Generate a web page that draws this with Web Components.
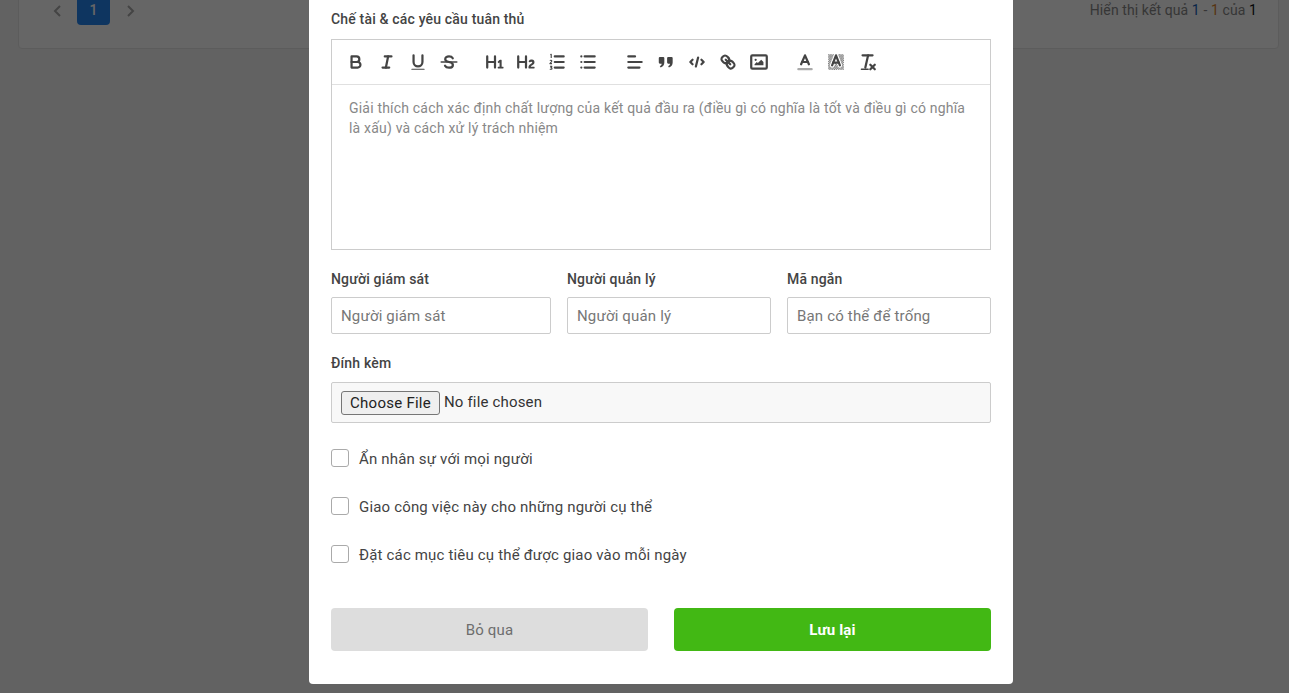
<!DOCTYPE html>
<html lang="vi">
<head>
<meta charset="utf-8">
<title>Form</title>
<style>
  html, body { margin: 0; height: 100%; overflow: hidden; background: #f5f5f5; font-family: Roboto, "Noto Sans", sans-serif; letter-spacing: .17px; }
</style>
</head>
<body>
<list-footer></list-footer>
<modal-dialog>
  <form-field label="Chế tài &amp; các yêu cầu tuân thủ" style="--gap: 10px; --mb: 19px">
    <rich-editor placeholder="Giải thích cách xác định chất lượng của kết quả đầu ra (điều gì có nghĩa là tốt và điều gì có nghĩa là xấu) và cách xử lý trách nhiệm"></rich-editor>
  </form-field>
  <field-row style="--mb: 19px">
    <form-field label="Người giám sát"><text-input placeholder="Người giám sát"></text-input></form-field>
    <form-field label="Người quản lý"><text-input placeholder="Người quản lý"></text-input></form-field>
    <form-field label="Mã ngắn"><text-input placeholder="Bạn có thể để trống"></text-input></form-field>
  </field-row>
  <form-field label="Đính kèm" style="--gap: 9px; --mb: 26px"><file-box></file-box></form-field>
  <check-row>Ẩn nhân sự với mọi người</check-row>
  <check-row>Giao công việc này cho những người cụ thể</check-row>
  <check-row>Đặt các mục tiêu cụ thể được giao vào mỗi ngày</check-row>
  <modal-actions></modal-actions>
</modal-dialog>

<script>
// Quill style toolbar icons, 18x18 viewBox
const ICONS = {
  bold: '<path d="M5,4H9.5A2.5,2.5,0,0,1,12,6.5v0A2.5,2.5,0,0,1,9.5,9H5V4Z"/><path d="M5,9h5.5A2.5,2.5,0,0,1,13,11.5v0A2.5,2.5,0,0,1,10.5,14H5V9Z"/>',
  italic: '<line x1="7" x2="13" y1="4" y2="4"/><line x1="5" x2="11" y1="14" y2="14"/><line x1="8" x2="10" y1="14" y2="4"/>',
  underline: '<path d="M5,3V9a4,4,0,0,0,8,0V3"/><rect class="f" x="3" y="15" width="12" height="1" rx=".5"/>',
  strike: '<line x1="2" x2="16" y1="9" y2="9" stroke-width="1.4"/><path d="M12.4 5.6C11.6 4.2 10.4 3.9 9 3.9 7 3.9 5.6 5 5.6 6.5 5.6 8 7 8.6 9 9c2.2.4 3.5 1.1 3.5 2.6 0 1.500-1.500 2.500-3.500 2.500-1.500 0-2.900-.5-3.600-1.800"/>',
  h1: '<path class="f" d="M10,4V14a1,1,0,0,1-2,0V10H3v4a1,1,0,0,1-2,0V4A1,1,0,0,1,3,4V8H8V4a1,1,0,0,1,2,0Zm6.06787,9.209H14.98975V7.59863a.54085.54085,0,0,0-.605-.60547h-.62744a1.01119,1.01119,0,0,0-.748.29688L11.645,8.56641a.5435.5435,0,0,0-.022.8584l.28613.30762a.53861.53861,0,0,0,.84717.0332l.09912-.08789a1.2137,1.2137,0,0,0,.2417-.35254h.02246s-.01123.30859-.01123.60547V13.209H12.041a.54085.54085,0,0,0-.605.60547v.43945a.54085.54085,0,0,0,.605.60547h4.02686a.54085.54085,0,0,0,.605-.60547v-.43945A.54085.54085,0,0,0,16.06787,13.209Z"/>',
  h2: '<path class="f" d="M16.73975,13.81445v.43945a.54085.54085,0,0,1-.605.60547H11.855a.58392.58392,0,0,1-.64893-.60547V14.0127c0-2.90527,3.39941-3.42187,3.39941-4.55469a.77675.77675,0,0,0-.84717-.78125,1.17684,1.17684,0,0,0-.83594.38477c-.2749.26367-.561.374-.85791.13184l-.4292-.34082c-.30811-.24219-.38525-.51758-.1543-.81445a2.97155,2.97155,0,0,1,2.45361-1.17676,2.45393,2.45393,0,0,1,2.68408,2.40918c0,2.45312-3.1792,2.92676-3.27832,3.93848h2.79443A.54085.54085,0,0,1,16.73975,13.81445ZM9,3A.99974.99974,0,0,0,8,4V8H3V4A1,1,0,0,0,1,4V14a1,1,0,0,0,2,0V10H8v4a1,1,0,0,0,2,0V4A.99974.99974,0,0,0,9,3Z"/>',
  ol: '<line x1="7" x2="15" y1="4" y2="4"/><line x1="7" x2="15" y1="9" y2="9"/><line x1="7" x2="15" y1="14" y2="14"/><path stroke-width="1" d="M3 2.500l.8-.5V5.500M2.600 7.800c.5-.7 1.900-.5 1.700.5-.1.600-1.500 1.400-1.700 2.200h1.900M2.700 12.800h1.700l-.9 1.200c.8 0 1 .4 1 .8 0 .8-1.300 1-1.900.4" stroke-linecap="butt"/>',
  ul: '<line x1="6" x2="15" y1="4" y2="4"/><line x1="6" x2="15" y1="9" y2="9"/><line x1="6" x2="15" y1="14" y2="14"/><line x1="3" x2="3" y1="4" y2="4"/><line x1="3" x2="3" y1="9" y2="9"/><line x1="3" x2="3" y1="14" y2="14"/>',
  align: '<line x1="3" x2="15" y1="9" y2="9"/><line x1="3" x2="13" y1="14" y2="14"/><line x1="3" x2="9" y1="4" y2="4"/>',
  quote: '<path class="f" d="M2.500 5.500a1 1 0 0 1 1-1h3a1 1 0 0 1 1 1v4c0 2.500-1.300 3.900-3.400 4.500l-.7-1.300c1.200-.6 1.700-1.300 1.700-2.200H3.500a1 1 0 0 1-1-1z"/><path class="f" d="M10 5.500a1 1 0 0 1 1-1h3a1 1 0 0 1 1 1v4c0 2.500-1.300 3.900-3.400 4.500l-.7-1.300c1.200-.6 1.700-1.300 1.700-2.200H11a1 1 0 0 1-1-1z"/>',
  code: '<polyline points="5 7 3 9 5 11"/><polyline points="13 7 15 9 13 11"/><line x1="10" x2="8" y1="5" y2="13"/>',
  link: '<line x1="7" x2="11" y1="7" y2="11"/><path d="M8.9,4.577a3.476,3.476,0,0,1,.36,4.679A3.476,3.476,0,0,1,4.577,8.9C3.185,7.5,2.035,6.4,4.217,4.217S7.5,3.185,8.9,4.577Z"/><path d="M13.423,9.1a3.476,3.476,0,0,0-4.679-.36,3.476,3.476,0,0,0,.36,4.679c1.392,1.392,2.5,2.542,4.679.36S14.815,10.5,13.423,9.1Z"/>',
  image: '<rect x="2" y="3" width="14" height="12" rx="1"/><circle class="f" cx="6" cy="7" r="1"/><polyline class="f" stroke="none" points="5 12 5 11 7 9 8 10 11 7 13 9 13 12 5 12"/>',
  color: '<line x1="3" x2="15" y1="15.500" y2="15.500" stroke="#aaa"/><polyline points="5.500 11 9 3 12.500 11"/><line x1="11.630" x2="6.380" y1="9" y2="9"/>',
  background: '<defs><pattern id="hatch" width="2" height="2" patternUnits="userSpaceOnUse"><rect class="f" width="1" height="1"/><rect class="f" x="1" y="1" width="1" height="1"/></pattern></defs><rect x="2" y="2" width="14" height="14" fill="url(#hatch)" stroke="none"/><polyline points="5.500 12 9 3 12.500 12" stroke="#fff" stroke-width="4"/><polyline points="5.500 12 9 3 12.500 12"/><line x1="11.630" x2="6.380" y1="9.500" y2="9.500"/>',
  clean: '<line x1="5" x2="14" y1="3" y2="3"/><line x1="10" x2="7.500" y1="3" y2="14"/><line x1="4" x2="10" y1="15.500" y2="15.500" stroke-width="1.400"/><line x1="12" x2="16" y1="11.500" y2="15.500"/><line x1="16" x2="12" y1="11.500" y2="15.500"/>'
};

const TOOL_GROUPS = [
  ['bold', 'italic', 'underline', 'strike'],
  ['h1', 'h2', 'ol', 'ul'],
  ['align', 'quote', 'code', 'link', 'image'],
  ['color', 'background', 'clean']
];

class ListFooter extends HTMLElement {
  constructor() {
    super();
    this.attachShadow({ mode: 'open' });
    this.shadowRoot.innerHTML = `
      <style>
        :host { display: block; }
        .card {
          margin: -20px 10px 0 18px;
          height: 69px;
          background: #fff;
          border: 1px solid #e6e6e6;
          border-radius: 4px;
          box-sizing: border-box;
          padding: 0 21px 0 33px;
          display: flex;
          justify-content: space-between;
          font-size: 14px;
          color: #888;
        }
        .pager { display: flex; align-items: flex-start; }
        .arrow { width: 12px; height: 44px; display: flex; align-items: center; padding-top: 15px; box-sizing: border-box; }
        .arrow svg { width: 12px; height: 14px; fill: none; stroke: #aaa; stroke-width: 2; }
        .page {
          width: 33px; height: 44px; margin: 0 14px 0 13px;
          background: #2585f0; color: #fff; border-radius: 4px;
          display: flex; align-items: flex-end; justify-content: center;
          font-weight: 500; padding-bottom: 2px; box-sizing: border-box; line-height: 26px;
        }
        .info { line-height: 19px; padding-top: 20px; letter-spacing: .1px; }
        .a { color: #1a5fb4; } .b { color: #d9822b; } .c { color: #111; }
      </style>
      <div class="card">
        <div class="pager">
          <span class="arrow"><svg viewBox="0 0 12 14"><polyline points="8,2 3,7 8,12"/></svg></span>
          <span class="page">1</span>
          <span class="arrow"><svg viewBox="0 0 12 14"><polyline points="4,2 9,7 4,12"/></svg></span>
        </div>
        <div class="info">Hiển thị kết quả <span class="a">1</span> - <span class="b">1</span> của <span class="c">1</span></div>
      </div>`;
  }
}

class ModalDialog extends HTMLElement {
  constructor() {
    super();
    this.attachShadow({ mode: 'open' });
    this.shadowRoot.innerHTML = `
      <style>
        :host {
          position: fixed; inset: 0;
          background: rgba(0, 0, 0, .6);
          display: flex; justify-content: center; align-items: flex-end;
          padding: 0 0 9px 33px; box-sizing: border-box; overflow: hidden;
        }
        .box {
          width: 704px; box-sizing: border-box; flex: none;
          background: #fff; border-radius: 4px;
          padding: 30px 22px 33px;
          color: #333; font-size: 14px;
        }
      </style>
      <div class="box"><slot></slot></div>`;
  }
}

class FormField extends HTMLElement {
  constructor() {
    super();
    this.attachShadow({ mode: 'open' });
    this.shadowRoot.innerHTML = `
      <style>
        :host { display: block; margin-bottom: var(--mb, 20px); min-width: 0; }
        label { display: block; font-size: 14px; font-weight: 500; line-height: 20px; margin-bottom: var(--gap, 8px); color: #444; }
      </style>
      <label></label><slot></slot>`;
  }
  connectedCallback() {
    this.shadowRoot.querySelector('label').textContent = this.getAttribute('label');
  }
}

class FieldRow extends HTMLElement {
  constructor() {
    super();
    this.attachShadow({ mode: 'open' });
    this.shadowRoot.innerHTML = `
      <style>
        :host { display: grid; grid-template-columns: 220px 204px 204px; column-gap: 16px; }
      </style>
      <slot></slot>`;
  }
}

class RichEditor extends HTMLElement {
  constructor() {
    super();
    this.attachShadow({ mode: 'open' });
    const groups = TOOL_GROUPS.map(g => `
      <span class="group">${g.map(n => `<span class="btn"><svg viewBox="0 0 18 18">${ICONS[n]}</svg></span>`).join('')}</span>
    `).join('');
    this.shadowRoot.innerHTML = `
      <style>
        :host { display: block; border: 1px solid #ccc; height: 211px; box-sizing: border-box; }
        .toolbar {
          display: flex; height: 45px; box-sizing: border-box;
          border-bottom: 1px solid #e0e0e0; padding-left: 8px; align-items: center;
        }
        .group { display: flex; margin-right: 15.5px; }
        .btn { width: 31px; height: 24px; display: flex; align-items: center; justify-content: center; }
        svg { width: 20px; height: 20px; fill: none; stroke: #444; stroke-width: 2; stroke-linecap: round; stroke-linejoin: round; }
        svg .f { fill: #444; stroke: none; }
        .body { padding: 13px 17px; font-size: 14px; line-height: 20px; color: #888; letter-spacing: .195px; }
      </style>
      <div class="toolbar">${groups}</div>
      <div class="body"></div>`;
  }
  connectedCallback() {
    this.shadowRoot.querySelector('.body').textContent = this.getAttribute('placeholder');
  }
}

class TextInput extends HTMLElement {
  constructor() {
    super();
    this.attachShadow({ mode: 'open' });
    this.shadowRoot.innerHTML = `
      <style>
        :host { display: block; }
        input {
          display: block; width: 100%; height: 37px; box-sizing: border-box;
          border: 1px solid #ccc; border-radius: 2px; padding: 0 9px;
          font: 15px Roboto, sans-serif; letter-spacing: .17px; color: #333; outline: none;
        }
        input::placeholder { color: #777; opacity: 1; }
      </style>
      <input type="text">`;
  }
  connectedCallback() {
    this.shadowRoot.querySelector('input').placeholder = this.getAttribute('placeholder');
  }
}

class FileBox extends HTMLElement {
  constructor() {
    super();
    this.attachShadow({ mode: 'open' });
    this.shadowRoot.innerHTML = `
      <style>
        :host {
          display: flex; align-items: center; height: 41px; box-sizing: border-box;
          background: #f8f8f8; border: 1px solid #ccc; border-radius: 2px;
          padding: 0 0 2px 9px; font: 15px Roboto, sans-serif; color: #333;
        }
        button {
          height: 24px; width: 99px; padding: 0; margin: 2px 4px 0 0; box-sizing: border-box;
          background: #efefef; border: 1px solid #767676; border-radius: 3px;
          font: 15px Roboto, sans-serif; letter-spacing: .25px; color: #222; line-height: 20px;
        }
      </style>
      <button type="button">Choose File</button><span>No file chosen</span>`;
  }
}

class CheckRow extends HTMLElement {
  constructor() {
    super();
    this.attachShadow({ mode: 'open' });
    this.shadowRoot.innerHTML = `
      <style>
        :host { display: flex; align-items: center; height: 18px; margin-bottom: 30px; font-size: 15px; color: #444; }
        .box { width: 18px; height: 18px; box-sizing: border-box; border: 1px solid #aaa; border-radius: 3px; background: #fff; margin-right: 10px; flex: none; }
        .text { line-height: 18px; padding-top: 2px; }
      </style>
      <span class="box"></span><span class="text"><slot></slot></span>`;
  }
}

class ModalActions extends HTMLElement {
  constructor() {
    super();
    this.attachShadow({ mode: 'open' });
    this.shadowRoot.innerHTML = `
      <style>
        :host { display: grid; grid-template-columns: 317px 317px; column-gap: 26px; padding-top: 15px; }
        button {
          height: 43px; border: 0; border-radius: 4px; padding: 0;
          font: 15px Roboto, sans-serif; letter-spacing: .17px;
        }
        .cancel { background: #ddd; color: #6e6e6e; }
        .save { background: #42b814; color: #fff; font-weight: 700; }
      </style>
      <button class="cancel" type="button">Bỏ qua</button>
      <button class="save" type="button">Lưu lại</button>`;
  }
}

customElements.define('list-footer', ListFooter);
customElements.define('modal-dialog', ModalDialog);
customElements.define('form-field', FormField);
customElements.define('field-row', FieldRow);
customElements.define('rich-editor', RichEditor);
customElements.define('text-input', TextInput);
customElements.define('file-box', FileBox);
customElements.define('check-row', CheckRow);
customElements.define('modal-actions', ModalActions);
</script>
</body>
</html>
